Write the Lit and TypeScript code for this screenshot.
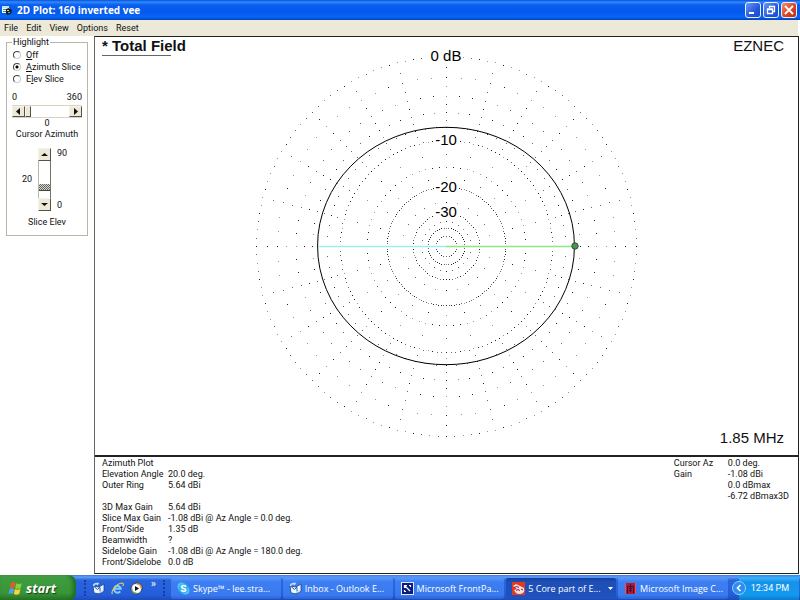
import { LitElement, html, svg, css } from "lit";
import { customElement, state } from "lit/decorators.js";

const OUTER = 190;

/** Radius of a level in dB below the outer ring, on the log-periodic antenna scale. */
const radiusOf = (db: number) => OUTER * Math.pow(0.89, db / 2);

type Dot = { x: number; y: number; shade: string };

function buildGrid(): Dot[] {
  const seen = new Map<string, Dot>();
  const add = (r: number, deg: number) => {
    const a = (deg * Math.PI) / 180;
    const fx = r * Math.cos(a);
    const fy = r * Math.sin(a);
    const x = Math.round(fx);
    const y = Math.round(fy);
    const off = Math.max(Math.abs(fx - x), Math.abs(fy - y));
    const shade = off < 0.28 ? "#222" : off < 0.42 ? "#666" : "#999";
    seen.set(`${x},${y}`, { x, y, shade });
  };
  const ring = (db: number, step: number) => {
    for (let d = 0; d < 360; d += step) add(radiusOf(db), d);
  };
  ring(0, 2.5);
  [2, 4, 6, 8].forEach((db) => ring(db, 5));
  ring(10, 2.5);
  ring(15, 5);
  ring(20, 2.5);
  ring(30, 5);
  ring(40, 7.5);
  ring(50, 15);
  [1, 3, 5, 7, 9, 12.5, 17.5, 25, 35].forEach((db) => ring(db, 15));
  return [...seen.values()];
}

function buildPattern(): string {
  const pts: string[] = [];
  for (let d = 0; d < 360; d += 5) {
    const a = (d * Math.PI) / 180;
    const r = radiusOf(6.72 + 1.35 * Math.sin(a) ** 2);
    pts.push(`${(r * Math.cos(a)).toFixed(1)},${(r * Math.sin(a)).toFixed(1)}`);
  }
  return pts.join(" ");
}

const GRID = buildGrid();
const PATTERN = buildPattern();
const LABELS = [
  { text: "0 dB", y: -185, w: 34 },
  { text: "-10", y: -101, w: 24 },
  { text: "-20", y: -54, w: 24 },
  { text: "-30", y: -29, w: 24 },
];

@customElement("polar-plot")
export class PolarPlot extends LitElement {
  static styles = css`
    :host { display: block; height: 100%; }
    .plot { display: block; height: 100%; margin: 0 auto; }
    .label { font: 15px "Liberation Sans", Arial, sans-serif; text-anchor: middle; }
  `;
  render() {
    return html`<svg class="plot" viewBox="-209 -209 418 418" role="img" aria-label="Azimuth pattern">
      <g shape-rendering="crispEdges">
        ${GRID.map((p) => svg`<rect x=${p.x} y=${p.y} width="1" height="1" fill=${p.shade} />`)}
      </g>
      ${LABELS.map((l) => svg`
        <rect x=${-l.w / 2} y=${l.y - 12} width=${l.w} height="13" fill="#fff" />
        <text class="label" x="0" y=${l.y}>${l.text}</text>`)}
      <polygon points=${PATTERN} fill="none" stroke="#000" />
      <path d="M-128 0.5H0" stroke="#9deeee" stroke-width="1.6" />
      <path d="M0 0.5H128" stroke="#8ee680" stroke-width="1.6" />
      <circle cx="129" cy="0" r="3.2" fill="#3a9a4a" stroke="#444" />
    </svg>`;
  }
}

const icons = {
  form: html`<svg class="icon" width="10" height="10" viewBox="0 0 10 10">
    <path d="M0 1h7v2H0z" fill="#bfe6ee" /><path d="M0 3h8v5H0z" fill="#f4fbfd" />
    <path d="M1 4.500h3M1 6.500h3" stroke="#3a8ea6" /><path d="M4 4l3-1 3 2-1 4-4 1-1-2z" fill="#14202c" />
    <path d="M5 5.500h2" stroke="#e4d34c" /><path d="M6 7.500h2" stroke="#4fb8c8" /></svg>`,
  flag: html`<svg width="15" height="15" viewBox="0 0 15 15">
    <path d="M3 2.2Q5 .6 7.4 2L6.300 7Q4 5.800 1.800 7.200z" fill="#f0562a" />
    <path d="M8.200 2.300Q11 3.600 13.800 2.200L12.600 7.200Q9.800 8.400 7.100 7.200z" fill="#86cf3e" />
    <path d="M1.600 8Q4 6.700 6.100 7.900L5 12.800Q2.700 11.600.4 13z" fill="#5a9bf2" />
    <path d="M6.900 8.100Q9.700 9.400 12.400 8L11.300 12.900Q8.400 14.300 5.800 13z" fill="#fbd13a" /></svg>`,
  mail: html`<svg class="icon" width="13" height="13" viewBox="0 0 13 13">
    <path d="M1 4l6 1 5-3v7l-4 3-6-1z" fill="#eef7ff" stroke="#1d3f86" stroke-width=".8" />
    <path d="M2 4.500l3.500 3L8 5M8 12V5.500" fill="none" stroke="#2458ad" />
    <path d="M1.500 4Q2 1 6 1.500L5 3M11 8q-1 2-4 2" fill="none" stroke="#b9e0ff" stroke-width="1.500" /></svg>`,
  ie: html`<svg class="icon" width="13" height="13" viewBox="0 0 13 13">
    <path d="M3.500 6.700h6.300A3.400 3.400 0 1 0 9.200 9.300" fill="none" stroke="#7fd0ff" stroke-width="2" />
    <path d="M1.500 12C-.5 10 5 1.500 11 1q2.500.3.600 3" fill="none" stroke="#e8c95a" stroke-width="1.200" /></svg>`,
  media: html`<svg class="icon" width="13" height="13" viewBox="0 0 13 13">
    <circle cx="6.500" cy="6.500" r="5.500" fill="#dfe5ee" stroke="#2a3247" />
    <path d="M6.500 1A5.500 5.500 0 0 1 12 6.500H6.500z" fill="#f08a24" /><path d="M1 6.500A5.500 5.500 0 0 0 6.500 12V6.500z" fill="#6aa860" />
    <circle cx="6.500" cy="6.500" r="4" fill="#fff" /><path d="M5 4v5l4-2.500z" fill="#111" /></svg>`,
  skype: html`<svg class="icon" width="13" height="13" viewBox="0 0 13 13">
    <circle cx="4.500" cy="4.500" r="4" fill="#4cc6f4" /><circle cx="8.500" cy="8.500" r="4" fill="#4cc6f4" /><circle cx="6.500" cy="6.500" r="5" fill="#35b7ee" />
    <path d="M9 4.600Q6.500 2.600 4.700 4.200 4 5.800 6.500 6.400 9.300 7 8.600 8.600 6.700 10.200 4.100 8.400" fill="none" stroke="#fff" stroke-width="1.500" /></svg>`,
  frontpage: html`<svg class="icon" width="13" height="13" viewBox="0 0 13 13">
    <rect x=".5" y=".5" width="12" height="12" fill="#0c1c84" stroke="#dbe6ff" />
    <path d="M3.500 3.500l5.500 5.500M3.500 6V3.500H6M8 3.500h1.500V5M3.500 8v1.500H5" fill="none" stroke="#fff" stroke-width="1.200" /></svg>`,
  red: html`<svg class="icon" width="13" height="13" viewBox="0 0 13 13">
    <rect width="13" height="13" fill="#e23a20" /><path d="M1 4q3-3 5-1l6 3q1 3-1 5-4 2-7 0L2 8l3-1z" fill="#f6e0e2" />
    <path d="M2 5.500q3-2 5 0M4 8.500q2-2 4 0M9 7l2 1" fill="none" stroke="#8a1f28" /></svg>`,
  image: html`<svg class="icon" width="13" height="13" viewBox="0 0 13 13">
    <rect x="1" y="1" width="11" height="11" fill="#a81c3a" /><path d="M3.500 11V4.500h6V11M5 6.500h3M5 8.500h3M6.500 2v8" fill="none" stroke="#4a0c26" />
    <path d="M1.500 1v11M11.500 1v11" stroke="#ee5068" /></svg>`,
};

const TASKS = [
  { icon: icons.skype, text: "Skype™ - lee.stra...", active: false },
  { icon: icons.mail, text: "Inbox - Outlook E...", active: false },
  { icon: icons.frontpage, text: "Microsoft FrontPa...", active: false },
  { icon: icons.red, text: "5 Core part of E...", active: true },
  { icon: icons.image, text: "Microsoft Image C...", active: false },
];

const RESULTS = [
  ["Azimuth Plot", ""],
  ["Elevation Angle", "20.0 deg."],
  ["Outer Ring", "5.64 dBi"],
  ["", ""],
  ["3D Max Gain", "5.64 dBi"],
  ["Slice Max Gain", "-1.08 dBi @ Az Angle = 0.0 deg."],
  ["Front/Side", "1.35 dB"],
  ["Beamwidth", "?"],
  ["Sidelobe Gain", "-1.08 dBi @ Az Angle = 180.0 deg."],
  ["Front/Sidelobe", "0.0 dB"],
];

const CURSOR = [
  ["Cursor Az", "0.0 deg."],
  ["Gain", "-1.08 dBi"],
  ["", "0.0 dBmax"],
  ["", "-6.72 dBmax3D"],
];

@customElement("app-root")
export class AppRoot extends LitElement {
  @state() private azimuth = 0;
  @state() private elevation = 20;

  static styles = css`
    * { box-sizing: border-box; }
    :host {
      display: grid; grid-template-rows: 20px 16px 1fr 26px; min-height: 100vh;
      background: #fff; color: #111; font: 9px/11px Roboto, "Liberation Sans", sans-serif;
    }
    button { font: inherit; color: inherit; padding: 0; margin: 0; border: 0; background: none; white-space: nowrap; }
    .title {
      display: flex; align-items: center; gap: 5px; padding: 0 3px 0 2px; color: #fff;
      background: linear-gradient(#0a4fd8, #2f8bfb 2px, #0a5ef0 5px, #0458ea 12px, #0667fb 17px, #0342b8);
    }
    .title h1 { flex: 1; margin: 0; font: bold 10px/20px "Open Sans", "Noto Sans", sans-serif; }
    .caps { display: flex; gap: 2px; }
    .cap { display: block; width: 16px; height: 16px; border: 1px solid #e8efff; border-radius: 3px; background: linear-gradient(135deg, #6d97f6, #2457dc 60%, #1b4cc8); }
    .cap svg { display: block; }
    .cap.close { background: linear-gradient(135deg, #f0906e, #d8401c 60%, #b93512); }
    .menu { display: flex; align-items: center; gap: 8px; padding-left: 4px; margin-right: 2px; background: #ece9d8; }
    .main { display: flex; margin: 0 1px 1px 0; }
    .side { width: 94px; padding: 1px 6px; }
    .group { border: 1px solid #b8b6a6; margin: 0; padding: 1px 5px 0; height: 199px; min-width: 0; }
    .group legend { padding: 0 1px; margin-left: 0; }
    .radio { display: flex; align-items: center; height: 12px; gap: 5px; padding-left: 1px; white-space: nowrap; }
    .radio input {
      appearance: none; width: 8px; height: 8px; margin: 0; border-radius: 50%;
      border: 1px solid; border-color: #444 #ccc #ccc #444; background: #fff;
    }
    .radio input:checked { background: radial-gradient(circle, #000 1px, #fff 2px); }
    .limits { display: flex; justify-content: space-between; margin-top: 7px; }
    .hbar { display: flex; height: 13px; border-top: 1px solid #d8d4c4; border-bottom: 1px solid #d8d4c4; margin: 2px 0 0; }
    .arrow { display: grid; place-items: center; flex: none; width: 13px; background: #ece9d8; border: 1px solid; border-color: #f6f4ea #55534a #55534a #f6f4ea; }
    .arrow svg { display: block; }
    .hbar input { appearance: none; flex: 1; min-width: 0; margin: 0; background: #fff; }
    .hbar input::-webkit-slider-thumb { appearance: none; width: 6px; height: 11px; background: #ece9d8; border: 1px solid; border-color: #f6f4ea #55534a #55534a #f6f4ea; }
    .center { display: block; text-align: center; }
    .elev { display: grid; grid-template-columns: 20px 13px 1fr; column-gap: 6px; height: 63px; margin: 8px 0 6px; }
    .elev output { align-self: center; text-align: right; }
    .vbar { display: flex; flex-direction: column; }
    .vbar .arrow { height: 13px; }
    .vbar input { appearance: none; writing-mode: vertical-lr; direction: rtl; flex: 1; min-height: 0; width: 13px; margin: 0; background: #fff; border-left: 1px solid #bbb8aa; border-right: 1px solid #77756a; }
    .vbar input::-webkit-slider-thumb { appearance: none; width: 11px; height: 7px; background: repeating-conic-gradient(#666 0 25%, #d8d5c6 0 50%) 0 0 / 2px 2px; border-bottom: 1px solid #444; }
    .ends { display: flex; flex-direction: column; justify-content: space-between; }
    .document { flex: 1; display: flex; flex-direction: column; border: 1px solid #222; border-left-color: #666; background: #fff; min-width: 0; }
    .chart { flex: 1; display: grid; grid-template-columns: 1fr 418px 1fr; padding: 0 8px 0 7px; min-height: 418px; font: 15px/17px "Liberation Sans", Arial, sans-serif; }
    .trace { justify-self: start; margin: 0; font: inherit; font-weight: bold; white-space: nowrap; z-index: 1; }
    .trace::after { content: ""; display: block; width: 69px; border-top: 1px solid #666; margin-top: 1px; }
    .corner { display: flex; flex-direction: column; justify-content: space-between; align-items: flex-end; white-space: nowrap; padding: 0 6px 9px 0; }
    .info { display: flex; justify-content: space-between; align-items: flex-start; border-top: 2px solid #222; padding: 1px 9px 5px 7px; }
    table { border-collapse: collapse; white-space: nowrap; }
    th, td { padding: 0; height: 11px; text-align: left; font-weight: normal; }
    .results th { width: 66px; }
    .cursor th { width: 54px; }
    .taskbar {
      display: flex; align-items: stretch; color: #fff; font: 9px/12px "Open Sans", "Noto Sans", sans-serif;
      background: linear-gradient(#3a76dc, #5fa0f8 2px, #2b66dc 5px, #245ddb 20px, #1c47ac);
    }
    .start {
      display: flex; align-items: center; gap: 3px; width: 76px; padding-left: 8px; border-radius: 0 8px 8px 0;
      background: linear-gradient(#5cb05a, #3f9b3f 4px, #379637 18px, #256f25);
      box-shadow: inset -3px 0 4px #1f6a26; font: italic bold 13px/18px "Open Sans", sans-serif; text-shadow: 1px 1px 1px #143f14;
    }
    .quick { display: flex; align-items: center; gap: 6px; width: 94px; padding-left: 8px; }
    .grip { align-self: center; height: 16px; border-left: 2px dotted #173e9c; }
    .icon-btn svg { display: block; }
    .more { align-self: flex-start; margin: 2px 1px 0 2px; font-size: 10px; }
    .tasks { flex: 1; display: flex; gap: 2px; padding: 3px 11px 2px 1px; min-width: 0; }
    .task {
      flex: 1; display: flex; align-items: center; gap: 3px; min-width: 0; padding-left: 6px; border-radius: 2px;
      background: linear-gradient(#5b98fa, #3c7ef2 4px, #3a7af0 17px, #2c63d0);
    }
    .task.active { background: linear-gradient(#173f9c, #1e4fb8 4px, #1f52bd); }
    .task .name { flex: 1; text-align: left; }
    .task .drop { margin-right: 3px; }
    .icon { flex: none; }
    .tray { display: flex; align-items: center; gap: 5px; padding-right: 10px; margin-right: 1px; font-family: Roboto, sans-serif; background: linear-gradient(#2b8be6, #3fb2f6 3px, #1592ea 7px, #129aee 20px, #0d72c4); }
    .tray svg { display: block; margin-left: -7px; }
  `;

  private arrow(label: string, d: string, act: () => void) {
    return html`<button class="arrow" aria-label=${label} @click=${act}>
      <svg width="7" height="7" viewBox="0 0 7 7"><path d=${d} fill="#111" /></svg></button>`;
  }

  private table(cls: string, rows: string[][]) {
    return html`<table class=${cls}><tbody>
      ${rows.map(([k, v]) => html`<tr><th scope="row">${k}</th><td>${v}</td></tr>`)}
    </tbody></table>`;
  }

  render() {
    return html`
      <header class="title">
        ${icons.form}
        <h1>2D Plot: 160 inverted vee</h1>
        <div class="caps">
          <button class="cap" aria-label="Minimize"><svg width="14" height="14"><path d="M3 10h5" stroke="#fff" stroke-width="2" /></svg></button>
          <button class="cap" aria-label="Restore"><svg width="14" height="14"><path d="M5.500 5V3.500h5v5H9M3.500 6h5v4.500h-5zM3 6.500h6" fill="none" stroke="#fff" stroke-width="1.300" /></svg></button>
          <button class="cap close" aria-label="Close"><svg width="14" height="14"><path d="M3 3l8 8M11 3l-8 8" stroke="#fff" stroke-width="1.800" /></svg></button>
        </div>
      </header>
      <nav class="menu">
        ${["File", "Edit", "View", "Options", "Reset"].map((m) => html`<button>${m}</button>`)}
      </nav>
      <main class="main">
        <aside class="side">
          <fieldset class="group">
            <legend>Highlight</legend>
            <label class="radio"><input type="radio" name="hl" /><span><u>O</u>ff</span></label>
            <label class="radio"><input type="radio" name="hl" checked /><span><u>A</u>zimuth Slice</span></label>
            <label class="radio"><input type="radio" name="hl" /><span>E<u>l</u>ev Slice</span></label>
            <div class="limits"><span>0</span><span>360</span></div>
            <div class="hbar">
              ${this.arrow("Decrease azimuth", "M5 0v7L1 3.500z", () => (this.azimuth = Math.max(0, this.azimuth - 1)))}
              <input id="az" type="range" min="0" max="360" .value=${String(this.azimuth)}
                @input=${(e: Event) => (this.azimuth = +(e.target as HTMLInputElement).value)} />
              ${this.arrow("Increase azimuth", "M2 0v7l4-3.500z", () => (this.azimuth = Math.min(360, this.azimuth + 1)))}
            </div>
            <output class="center" for="az">${this.azimuth}</output>
            <label class="center" for="az">Cursor Azimuth</label>
            <div class="elev">
              <output for="el">${this.elevation}</output>
              <div class="vbar">
                ${this.arrow("Increase elevation", "M0 5h7L3.500 2z", () => (this.elevation = Math.min(90, this.elevation + 1)))}
                <input id="el" type="range" min="0" max="90" .value=${String(this.elevation)}
                  @input=${(e: Event) => (this.elevation = +(e.target as HTMLInputElement).value)} />
                ${this.arrow("Decrease elevation", "M0 2h7L3.500 5z", () => (this.elevation = Math.max(0, this.elevation - 1)))}
              </div>
              <div class="ends"><span>90</span><span>0</span></div>
            </div>
            <label class="center" for="el">Slice Elev</label>
          </fieldset>
        </aside>
        <section class="document">
          <div class="chart">
            <h2 class="trace">* Total Field</h2>
            <polar-plot></polar-plot>
            <div class="corner"><span>EZNEC</span><span>1.85 MHz</span></div>
          </div>
          <div class="info">${this.table("results", RESULTS)}${this.table("cursor", CURSOR)}</div>
        </section>
      </main>
      <footer class="taskbar">
        <button class="start">${icons.flag}<span>start</span></button>
        <div class="quick">
          <span class="grip"></span>
          <button class="icon-btn" aria-label="Outlook">${icons.mail}</button>
          <button class="icon-btn" aria-label="Browser">${icons.ie}</button>
          <button class="icon-btn" aria-label="Media player">${icons.media}</button>
          <button class="more">»</button>
          <span class="grip"></span>
        </div>
        <div class="tasks">
          ${TASKS.map((t) => html`<button class="task ${t.active ? "active" : ""}">${t.icon}<span class="name">${t.text}</span>
            ${t.active ? html`<svg class="drop" width="5" height="3"><path d="M0 0h5L2.500 3z" fill="#fff" /></svg>` : ""}</button>`)}
        </div>
        <div class="tray">
          <svg width="14" height="14" viewBox="0 0 14 14"><circle cx="7" cy="7" r="6.500" fill="#2f8df0" stroke="#8fd0ff" /><path d="M8.500 4L5.500 7l3 3" fill="none" stroke="#fff" stroke-width="1.700" /></svg>
          <time>12:34 PM</time>
        </div>
      </footer>`;
  }
}
